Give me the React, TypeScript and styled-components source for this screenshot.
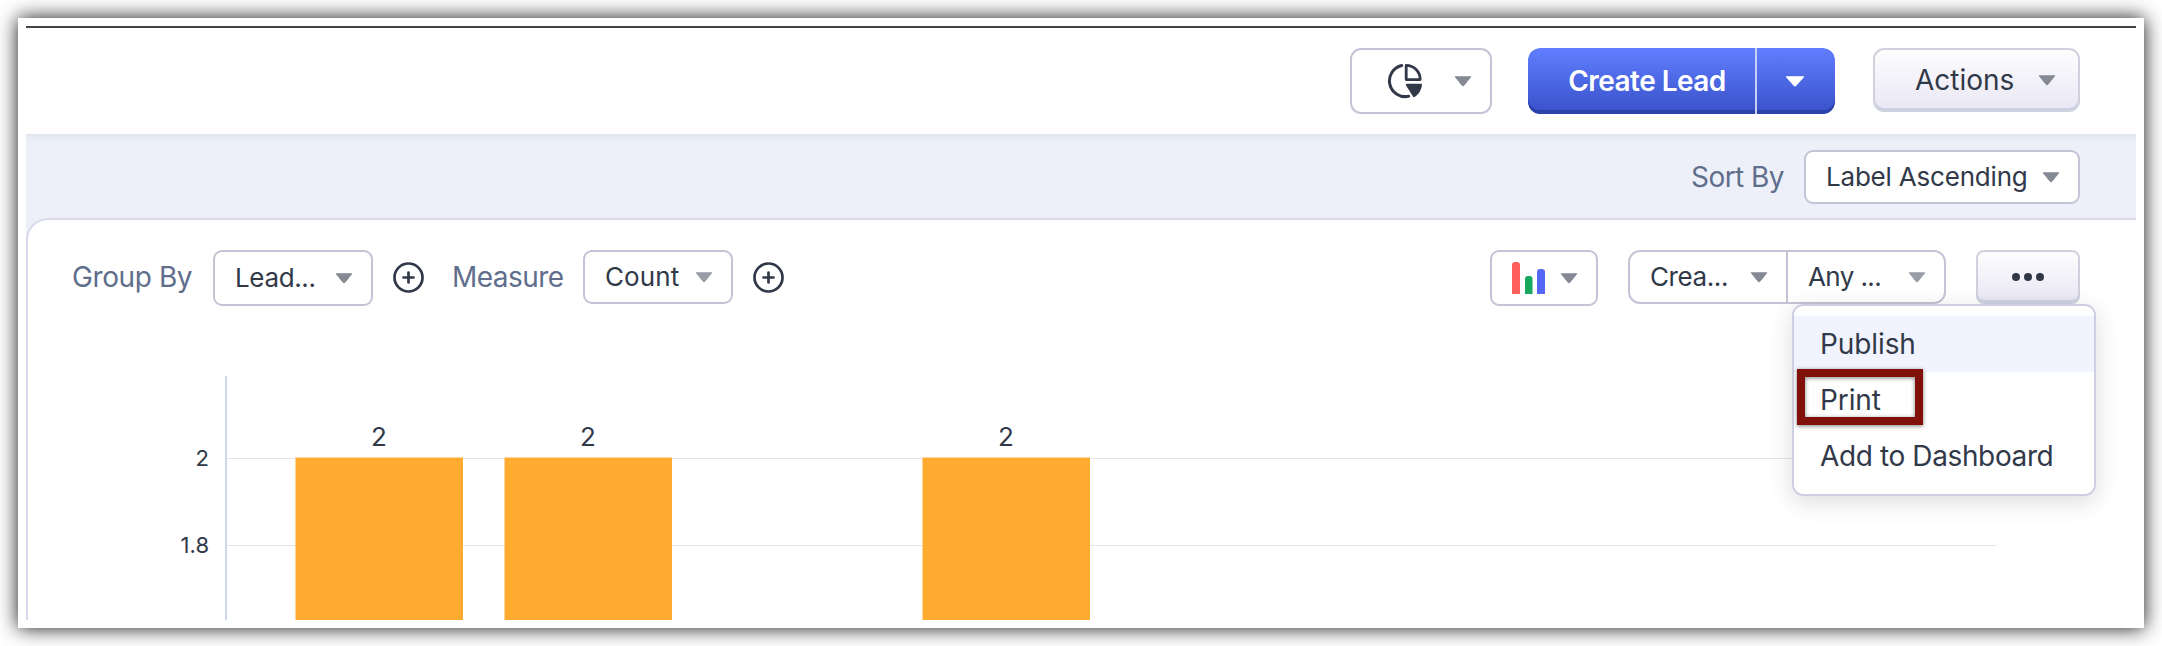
import React from "react";
import styled, { createGlobalStyle, css } from "styled-components";

const ink = "#313949";
const line = "#c6c3d6";

const GlobalStyle = createGlobalStyle`
  * { box-sizing: border-box; }
  body {
    margin: 0;
    background: #fff;
    overflow: hidden;
    font-family: Inter, "Liberation Sans", sans-serif;
    color: ${ink};
  }
`;

const Page = styled.main`
  height: 646px;
  padding: 18px;
`;

const Frame = styled.div`
  height: 610px;
  padding: 8px;
  background: #fff;
  box-shadow: 0 0 19px 0 rgba(0, 0, 0, 0.92);
`;

const Header = styled.header`
  display: flex;
  justify-content: flex-end;
  align-items: flex-start;
  height: 108px;
  padding: 20px 56px 0 0;
  border-top: 2px solid #444;
`;

const Content = styled.div`
  height: 486px;
  background: linear-gradient(#e2e6ed 0, #e9edf5 5px, #edf0f9 10px);
`;

const SortBar = styled.div`
  display: flex;
  justify-content: flex-end;
  height: 84px;
  padding: 16px 56px 0 0;
`;

const Card = styled.section`
  display: flex;
  flex-direction: column;
  height: 402px;
  background: #fff;
  border: solid #dad9ec;
  border-width: 2px 0 0 2px;
  border-top-left-radius: 22px;
`;

const Toolbar = styled.div`
  display: flex;
  align-items: flex-start;
  padding: 30px 56px 0 44px;
`;

const Label = styled.span<{ $width: number; $spacing: number }>`
  width: ${(p) => p.$width}px;
  height: 54px;
  line-height: 54px;
  font-size: 28px;
  letter-spacing: ${(p) => p.$spacing}px;
  white-space: nowrap;
  color: #5f6e8b;
`;

const Select = styled.div<{ $width: number; $height?: number; $pad?: number }>`
  display: flex;
  align-items: center;
  justify-content: space-between;
  width: ${(p) => p.$width}px;
  height: ${(p) => p.$height ?? 54}px;
  padding: 0 18px 0 ${(p) => p.$pad ?? 20}px;
  background: #fff;
  border: 2px solid ${line};
  border-radius: 9px;
`;

const Value = styled.span<{ $spacing?: number }>`
  font-size: 26px;
  line-height: 48px;
  letter-spacing: ${(p) => p.$spacing ?? 0}px;
  white-space: nowrap;
`;

const ViewSelect = styled(Select)`
  margin-right: 36px;
  border-radius: 11px;
`;

const ChartSelect = styled(Select)`
  margin: 0 30px 0 auto;
`;

const FilterGroup = styled.div`
  display: flex;
  width: 318px;
  height: 54px;
  margin-right: 30px;
  border: 2px solid ${line};
  border-radius: 12px;
`;

const FilterPart = styled.div<{ $width: number; $divided?: boolean }>`
  display: flex;
  align-items: center;
  justify-content: space-between;
  width: ${(p) => p.$width}px;
  padding: 0 18px 0 20px;
  ${(p) => p.$divided && css`border-right: 2px solid ${line};`}
`;

const PrimaryButton = styled.div`
  display: flex;
  width: 307px;
  height: 66px;
  margin-right: 38px;
  border-radius: 12px;
  overflow: hidden;
  color: #fff;
`;

const PrimaryPart = styled.div<{ $width: number; $first?: boolean }>`
  display: flex;
  align-items: center;
  justify-content: center;
  width: ${(p) => p.$width}px;
  padding: ${(p) => (p.$first ? "0 0 0 11px" : "0 2px 0 0")};
  background: linear-gradient(#607eff, #3b54cc 94%);
  box-shadow: inset 0 -4px 0 #2b42ab;
  border-radius: ${(p) => (p.$first ? "12px 0 0 12px" : "0 12px 12px 0")};
  font-size: 28px;
  font-weight: 600;
  letter-spacing: -0.55px;
`;

const PrimaryDivider = styled.div`
  width: 2px;
  background: #c9cff3;
`;

const SoftButton = styled.div<{ $width: number; $height: number }>`
  display: flex;
  align-items: center;
  width: ${(p) => p.$width}px;
  height: ${(p) => p.$height}px;
  background: linear-gradient(#fdfdfe, #e9e7f4);
  border: 2px solid #cfd2de;
  border-radius: 11px;
  box-shadow: inset 0 -2px 0 #ccd0e6;
  font-size: 28px;
`;

const ActionsButton = styled(SoftButton)`
  justify-content: space-between;
  padding: 0 22px 0 40px;
`;

const MoreButton = styled(SoftButton)`
  justify-content: center;
  border-radius: 8px;
`;

const MoreWrap = styled.div`
  position: relative;
`;

const Menu = styled.div`
  position: absolute;
  z-index: 2;
  top: 54px;
  right: -16px;
  width: 304px;
  height: 192px;
  padding-top: 10px;
  background: #fff;
  border: 2px solid #cfcfe2;
  border-radius: 11px;
  box-shadow: 0 6px 24px rgba(0, 0, 0, 0.14);
`;

const MenuItem = styled.div<{ $active?: boolean; $spacing?: number }>`
  height: 56px;
  padding-left: 26px;
  line-height: 56px;
  font-size: 28px;
  letter-spacing: ${(p) => p.$spacing ?? -0.1}px;
  white-space: nowrap;
  background: ${(p) => (p.$active ? "#f1f4fe" : "transparent")};
`;

const Highlight = styled.div`
  position: absolute;
  top: 63px;
  left: 3px;
  width: 126px;
  height: 56px;
  border: 8px solid #80110a;
  box-shadow: 0 1px 4px rgba(0, 0, 0, 0.5), inset 0 1px 4px rgba(0, 0, 0, 0.5);
`;

const PlusIcon = styled.svg`
  margin: 12px 28px 0 20px;
  flex: none;
`;

const ChartSvg = styled.svg`
  display: block;
  font-family: Inter, "Liberation Sans", sans-serif;
`;

const Caret = ({ color = "#858994", size = 18 }: { color?: string; size?: number }) => (
  <svg width={size} height="11" viewBox="0 0 18 11" preserveAspectRatio="none">
    <path d="M1.2 .8H16.8L9.8 9.5Q9 10.3 8.2 9.5Z" fill={color} stroke={color} strokeWidth="1" strokeLinejoin="round" />
  </svg>
);

const Plus = () => (
  <PlusIcon width="31" height="31" viewBox="0 0 31 31" fill="none" stroke={ink}>
    <circle cx="15.5" cy="15.5" r="14" strokeWidth="2.7" />
    <path d="M15.5 10.5v10M10.5 15.5h10" strokeWidth="2.7" strokeLinecap="round" />
  </PlusIcon>
);

const PieIcon = () => (
  <svg width="36" height="36" viewBox="0 0 36 36" fill="none" stroke={ink} strokeLinejoin="round" strokeLinecap="round">
    <path d="M14.7 2.5A15.7 15.7 0 0 0 21.7 33.2" strokeWidth="3" />
    <path d="M19.2 2.4V16.6H33.2C33.2 8.8 27 2.4 19.2 2.4Z" strokeWidth="2.8" />
    <path d="M19.8 21.8H34Q33.4 28.6 27 33.2Z" fill={ink} strokeWidth="2" />
  </svg>
);

const BarsIcon = () => (
  <svg width="34" height="32" viewBox="0 0 34 32">
    <path d="M0 32V3Q0 0 3 0H5Q8 0 8 3V32Z" fill="#ff5f5d" />
    <path d="M13 32V17Q13 14 16 14H17.5Q20.5 14 20.5 17V32Z" fill="#17a85f" />
    <path d="M25 32V10Q25 7 28 7H30Q33 7 33 10V32Z" fill="#5567f5" />
  </svg>
);

const DotsIcon = () => (
  <svg width="32" height="8" viewBox="0 0 32 8" fill={ink}>
    <circle cx="4" cy="4" r="4" />
    <circle cx="16" cy="4" r="4" />
    <circle cx="28" cy="4" r="4" />
  </svg>
);

const bars = [295.5, 504.5, 922.5];
const ticks = [
  { label: "2", y: 458.5 },
  { label: "1.8", y: 545.5 },
];

const Chart = () => (
  <ChartSvg width="2108" height="314" viewBox="28 306 2108 314" fill={ink}>
    {ticks.map((t) => (
      <g key={t.label}>
        <path d={`M227 ${t.y}H1996`} stroke="#e5e5e7" />
        <text x="209" y={t.y + 7.5} fontSize="22" textAnchor="end">{t.label}</text>
      </g>
    ))}
    <path d="M226 376V620" stroke="#ccd7ea" strokeWidth="2" />
    {bars.map((x) => (
      <g key={x}>
        <rect x={x} y="457.5" width="167.5" height="163" fill="#ffab30" />
        <text x={x + 83.5} y="446" fontSize="26" textAnchor="middle">2</text>
      </g>
    ))}
  </ChartSvg>
);

export default function App() {
  return (
    <>
      <GlobalStyle />
      <Page>
        <Frame>
          <Header>
            <ViewSelect $width={142} $height={66} $pad={35}>
              <PieIcon />
              <Caret />
            </ViewSelect>
            <PrimaryButton>
              <PrimaryPart $width={227} $first>Create Lead</PrimaryPart>
              <PrimaryDivider />
              <PrimaryPart $width={78}><Caret color="#fff" size={20} /></PrimaryPart>
            </PrimaryButton>
            <ActionsButton $width={207} $height={64}>
              <span>Actions</span>
              <Caret />
            </ActionsButton>
          </Header>
          <Content>
            <SortBar>
              <Label $width={113} $spacing={-0.55}>Sort By</Label>
              <Select $width={276}>
                <Value $spacing={-0.2}>Label Ascending</Value>
                <Caret />
              </Select>
            </SortBar>
            <Card>
              <Toolbar>
                <Label $width={141} $spacing={-0.4}>Group By</Label>
                <Select $width={160} $height={56}>
                  <Value $spacing={-0.35}>Lead...</Value>
                  <Caret />
                </Select>
                <Plus />
                <Label $width={131} $spacing={-0.55}>Measure</Label>
                <Select $width={150}>
                  <Value $spacing={0.1}>Count</Value>
                  <Caret color="#999da7" />
                </Select>
                <Plus />
                <ChartSelect $width={108} $height={56}>
                  <BarsIcon />
                  <Caret />
                </ChartSelect>
                <FilterGroup>
                  <FilterPart $width={158} $divided>
                    <Value $spacing={-0.4}>Crea...</Value>
                    <Caret />
                  </FilterPart>
                  <FilterPart $width={156}>
                    <Value $spacing={-0.6}>Any ...</Value>
                    <Caret color="#999da7" />
                  </FilterPart>
                </FilterGroup>
                <MoreWrap>
                  <MoreButton $width={104} $height={54}><DotsIcon /></MoreButton>
                  <Menu>
                    <MenuItem $active>Publish</MenuItem>
                    <MenuItem>Print</MenuItem>
                    <MenuItem $spacing={-0.38}>Add to Dashboard</MenuItem>
                    <Highlight />
                  </Menu>
                </MoreWrap>
              </Toolbar>
              <Chart />
            </Card>
          </Content>
        </Frame>
      </Page>
    </>
  );
}
